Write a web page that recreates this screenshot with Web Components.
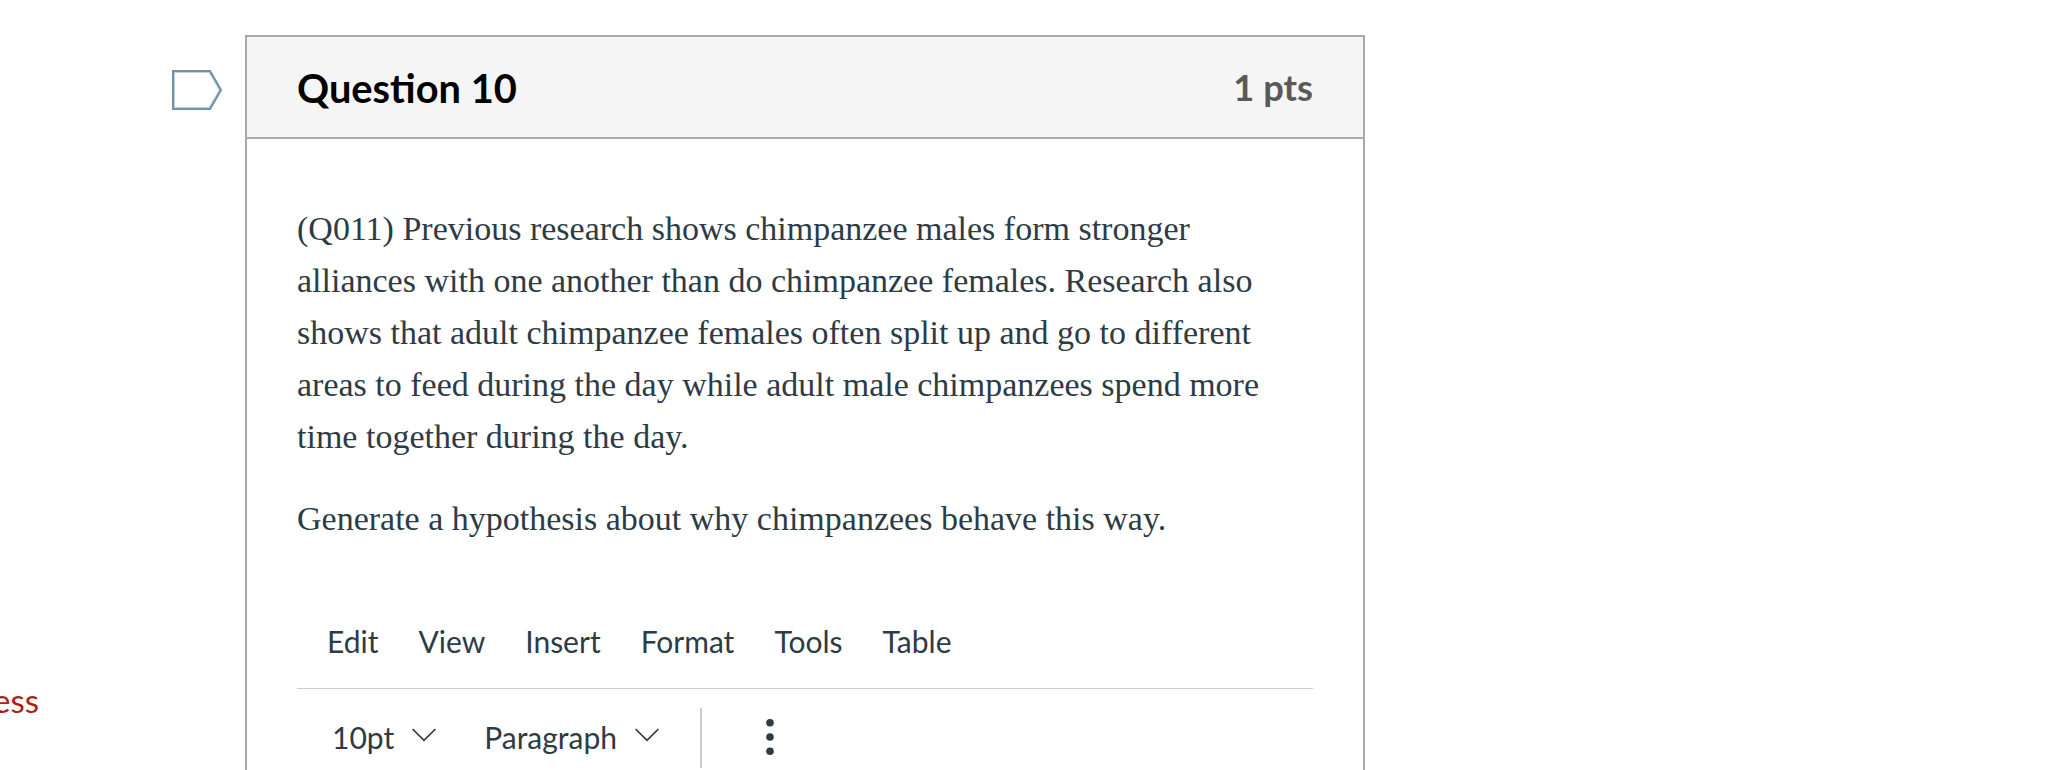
<!DOCTYPE html>
<html lang="en">
<head>
<meta charset="utf-8">
<title>Quiz</title>
<style>
body {
  margin: 0;
  background: #fff;
  color: #2d3b45;
  font-family: Lato, sans-serif;
  overflow: hidden;
}
</style>
</head>
<body>
<quiz-page>
  <side-link slot="side">ess</side-link>
  <question-flag slot="flag"></question-flag>
  <question-card points="1 pts">
    <span slot="name">Question 10</span>
    <question-text>
      <p>(Q011) Previous research shows chimpanzee males form stronger<br>alliances with one another than do chimpanzee females. Research also<br>shows that adult chimpanzee females often split up and go to different<br>areas to feed during the day while adult male chimpanzees spend more<br>time together during the day.</p>
      <p>Generate a hypothesis about why chimpanzees behave this way.</p>
    </question-text>
    <rich-editor>
      <menu-item slot="menu">Edit</menu-item>
      <menu-item slot="menu">View</menu-item>
      <menu-item slot="menu">Insert</menu-item>
      <menu-item slot="menu">Format</menu-item>
      <menu-item slot="menu">Tools</menu-item>
      <menu-item slot="menu">Table</menu-item>
      <tool-select>10pt</tool-select>
      <tool-select>Paragraph</tool-select>
      <tool-more></tool-more>
    </rich-editor>
  </question-card>
</quiz-page>

<script>
function define(name, html, setup) {
  const template = document.createElement('template');
  template.innerHTML = html;
  window.customElements.define(name, class extends HTMLElement {
    constructor() {
      super();
      const shadowRoot = this.attachShadow({mode: 'open'});
      shadowRoot.appendChild(template.content.cloneNode(true));
      if (setup) {
        setup(this, shadowRoot);
      }
    }
  });
}

define('quiz-page', `
<style>
:host {
  display: grid;
  grid-template-columns: 172px 73px 1120px;
  height: 770px;
  overflow: hidden;
}
.side {
  padding-top: 681px;
  overflow: hidden;
}
.flag {
  padding-top: 70px;
}
.main {
  padding-top: 35px;
}
</style>
<div class="side"><slot name="side"></slot></div>
<div class="flag"><slot name="flag"></slot></div>
<div class="main"><slot></slot></div>
`);

define('side-link', `
<style>
:host {
  display: block;
  margin-left: -7px;
  color: #af2116;
  font-size: 33px;
  line-height: 38px;
}
</style>
<slot></slot>
`);

define('question-flag', `
<style>
:host, svg {
  display: block;
}
</style>
<svg width="50" height="40" viewBox="0 0 50 40" fill="none">
  <path d="M1.5 1.5H37.6L48.4 20L37.6 38.5H1.5Z" stroke="#c3d0da" stroke-width="3"/>
  <path d="M1 1H38L49 20L38 39H1Z" stroke="#7290a6" stroke-width="2"/>
</svg>
`);

define('question-card', `
<style>
:host {
  display: block;
  box-sizing: border-box;
  height: 760px;
  border: 2px solid #aaa;
}
header {
  display: flex;
  align-items: center;
  justify-content: space-between;
  height: 100px;
  padding: 0 50px;
  background: #f5f5f5;
  border-bottom: 2px solid #aaa;
  font-weight: bold;
}
.name {
  padding-top: 1px;
  color: #000;
  font-size: 39.8px;
}
.points {
  color: #595959;
  font-size: 36.3px;
}
.body {
  padding: 64px 50px 0;
}
</style>
<header>
  <div class="name"><slot name="name"></slot></div>
  <div class="points"></div>
</header>
<div class="body"><slot></slot></div>
`, (el, root) => {
  root.querySelector('.points').textContent = el.getAttribute('points');
});

define('question-text', `
<style>
:host {
  display: block;
  font: 34px/52px "Liberation Serif", serif;
  white-space: nowrap;
}
::slotted(p) {
  margin: 0 0 30px !important;
}
</style>
<slot></slot>
`);

define('rich-editor', `
<style>
:host {
  display: block;
  margin-top: 49px;
  font-size: 30px;
}
.menu {
  display: flex;
  gap: 40px;
  height: 94px;
  align-items: center;
  padding-left: 30px;
  border-bottom: 1px solid #c7cdd1;
}
.tools {
  display: flex;
  align-items: center;
  height: 97px;
  padding-left: 35px;
}
</style>
<div class="menu"><slot name="menu"></slot></div>
<div class="tools"><slot></slot></div>
`);

define('menu-item', `
<style>
:host {
  display: block;
}
</style>
<slot></slot>
`);

define('tool-select', `
<style>
:host {
  display: flex;
  align-items: center;
  gap: 18px;
  margin-right: 48px;
  padding-bottom: 2px;
}
svg {
  display: block;
  margin-bottom: 4px;
}
</style>
<slot></slot>
<svg width="24" height="14" viewBox="0 0 24 14" fill="none" stroke="#2d3b45" stroke-width="1.7">
  <path d="M.6 1L12 12.3L23.4 1"/>
</svg>
`);

define('tool-more', `
<style>
:host {
  display: flex;
  align-items: center;
  height: 60px;
  margin-left: -7px;
  padding-left: 64px;
  border-left: 2px solid #c7cdd1;
}
svg {
  display: block;
  margin-bottom: 2px;
}
</style>
<svg width="8" height="38" viewBox="0 0 8 38" fill="#2d3b45">
  <circle cx="4" cy="4.8" r="3.8"/>
  <circle cx="4" cy="19" r="3.8"/>
  <circle cx="4" cy="33.2" r="3.8"/>
</svg>
`);
</script>
</body>
</html>
